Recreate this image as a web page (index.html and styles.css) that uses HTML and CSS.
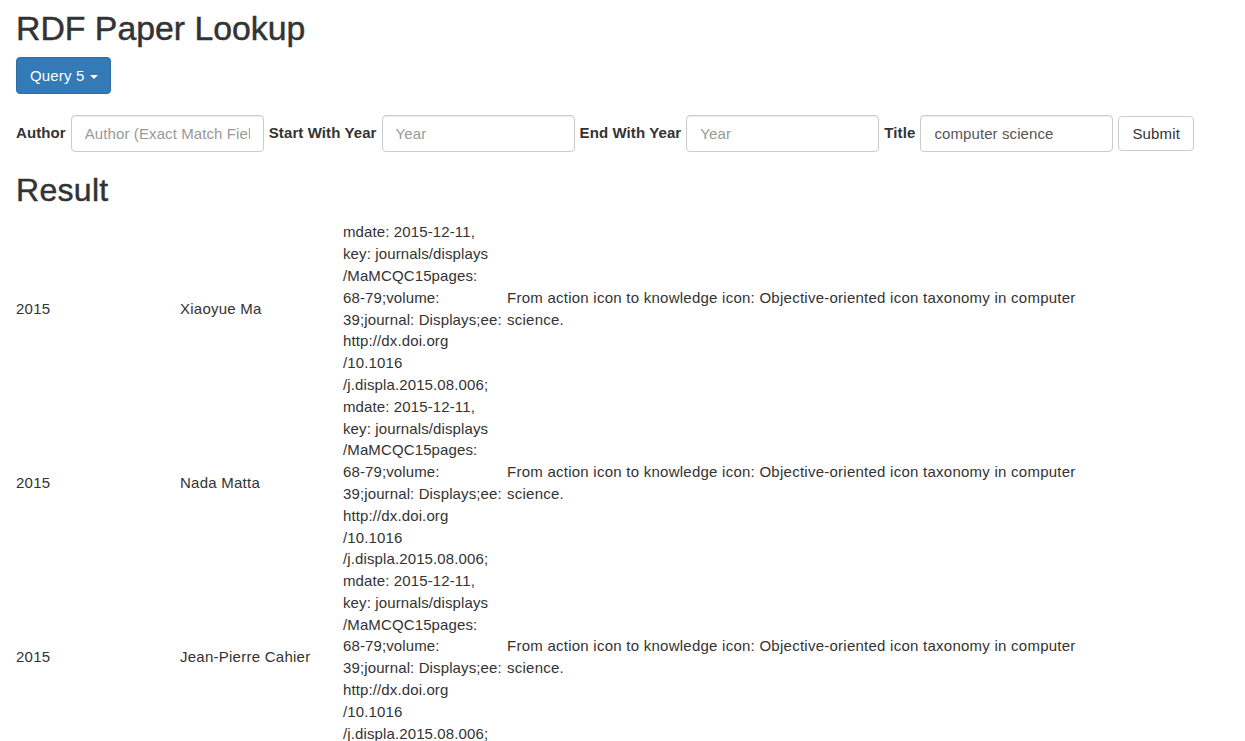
FILE: index.html
```html
<!DOCTYPE html>
<html lang="en">
<head>
<meta charset="utf-8">
<title>RDF Paper Lookup</title>
<link rel="stylesheet" href="styles.css">
</head>
<body>
<div class="page">
  <h1 class="title">RDF Paper Lookup</h1>
  <button class="btn btn-primary" type="button">Query 5 <span class="caret"></span></button>

  <form class="lookup-form">
    <label class="field-label">Author</label>
    <input class="field-input" type="text" placeholder="Author (Exact Match Field)">
    <label class="field-label">Start With Year</label>
    <input class="field-input" type="text" placeholder="Year">
    <label class="field-label">End With Year</label>
    <input class="field-input" type="text" placeholder="Year">
    <label class="field-label">Title</label>
    <input class="field-input" type="text" value="computer science">
    <button class="btn btn-default" type="button">Submit</button>
  </form>

  <h2 class="result-title">Result</h2>
  <table class="result-table">
    <colgroup>
      <col class="col-year">
      <col class="col-author">
      <col class="col-meta">
      <col class="col-title">
    </colgroup>
    <tbody>
      <tr>
        <td>2015</td>
        <td>Xiaoyue Ma</td>
        <td class="meta">mdate: 2015-12-11,<br>key: journals/displays<br>/MaMCQC15pages:<br>68-79;volume:<br>39;journal: Displays;ee:<br>http://dx.doi.org<br>/10.1016<br>/j.displa.2015.08.006;</td>
        <td>From action icon to knowledge icon: Objective-oriented icon taxonomy in computer science.</td>
      </tr>
      <tr>
        <td>2015</td>
        <td>Nada Matta</td>
        <td class="meta">mdate: 2015-12-11,<br>key: journals/displays<br>/MaMCQC15pages:<br>68-79;volume:<br>39;journal: Displays;ee:<br>http://dx.doi.org<br>/10.1016<br>/j.displa.2015.08.006;</td>
        <td>From action icon to knowledge icon: Objective-oriented icon taxonomy in computer science.</td>
      </tr>
      <tr>
        <td>2015</td>
        <td>Jean-Pierre Cahier</td>
        <td class="meta">mdate: 2015-12-11,<br>key: journals/displays<br>/MaMCQC15pages:<br>68-79;volume:<br>39;journal: Displays;ee:<br>http://dx.doi.org<br>/10.1016<br>/j.displa.2015.08.006;</td>
        <td>From action icon to knowledge icon: Objective-oriented icon taxonomy in computer science.</td>
      </tr>
    </tbody>
  </table>
</div>
</body>
</html>
```
FILE: styles.css
```css
* {
  box-sizing: border-box;
}

html, body {
  margin: 0;
  padding: 0;
  background: #fff;
}

body {
  font-family: "Liberation Sans", Arial, Helvetica, sans-serif;
  font-size: 15px;
  line-height: 21.8px;
  letter-spacing: 0.25px;
  color: #333;
}

.page {
  padding: 0 16px;
}

.title {
  font-size: 33.8px;
  font-weight: 500;
  line-height: 1.1;
  letter-spacing: 0;
  margin: 10px 0 10px;
  color: #333;
  -webkit-text-stroke: 0.45px #333;
}

.btn {
  display: inline-block;
  font-family: inherit;
  font-size: 15px;
  line-height: 21.8px;
  letter-spacing: 0.15px;
  border: 1px solid transparent;
  border-radius: 4px;
  cursor: pointer;
  white-space: nowrap;
}

.btn-primary {
  background: #337ab7;
  border-color: #2e6da4;
  color: #fff;
  padding: 6.6px 12px 6.6px 13px;
}

.caret {
  display: inline-block;
  width: 0;
  height: 0;
  margin-left: 1px;
  vertical-align: middle;
  border-top: 4.4px solid;
  border-left: 4.4px solid transparent;
  border-right: 4.4px solid transparent;
}

.btn-default {
  background: #fff;
  border-color: #ccc;
  color: #333;
  padding: 5.6px 13px;
}

.lookup-form {
  display: flex;
  align-items: center;
  gap: 5px;
  margin-top: 21px;
}

.field-label {
  font-weight: bold;
  letter-spacing: 0.1px;
  white-space: nowrap;
  margin-top: -2px;
}

.field-input {
  width: 193px;
  height: 37px;
  padding: 6px 13px;
  font-family: inherit;
  font-size: 15px;
  letter-spacing: 0.1px;
  color: #555;
  background: #fff;
  border: 1px solid #ccc;
  border-radius: 4px;
  box-shadow: inset 0 1px 1px rgba(0, 0, 0, 0.075);
}

.field-input::placeholder {
  color: #999;
}

.result-title {
  font-size: 32px;
  font-weight: 500;
  line-height: 1.1;
  letter-spacing: 0.3px;
  margin: 21px 0 13px;
  color: #333;
  -webkit-text-stroke: 0.45px #333;
}

.result-table {
  border-collapse: collapse;
  border-spacing: 0;
  table-layout: fixed;
  width: 1075px;
}

.result-table td {
  padding: 0;
  vertical-align: middle;
  text-align: left;
}

.result-table .meta {
  letter-spacing: 0.12px;
}

.col-year {
  width: 164px;
}

.col-author {
  width: 163px;
}

.col-meta {
  width: 164px;
}

.col-title {
  width: 584px;
}
```
